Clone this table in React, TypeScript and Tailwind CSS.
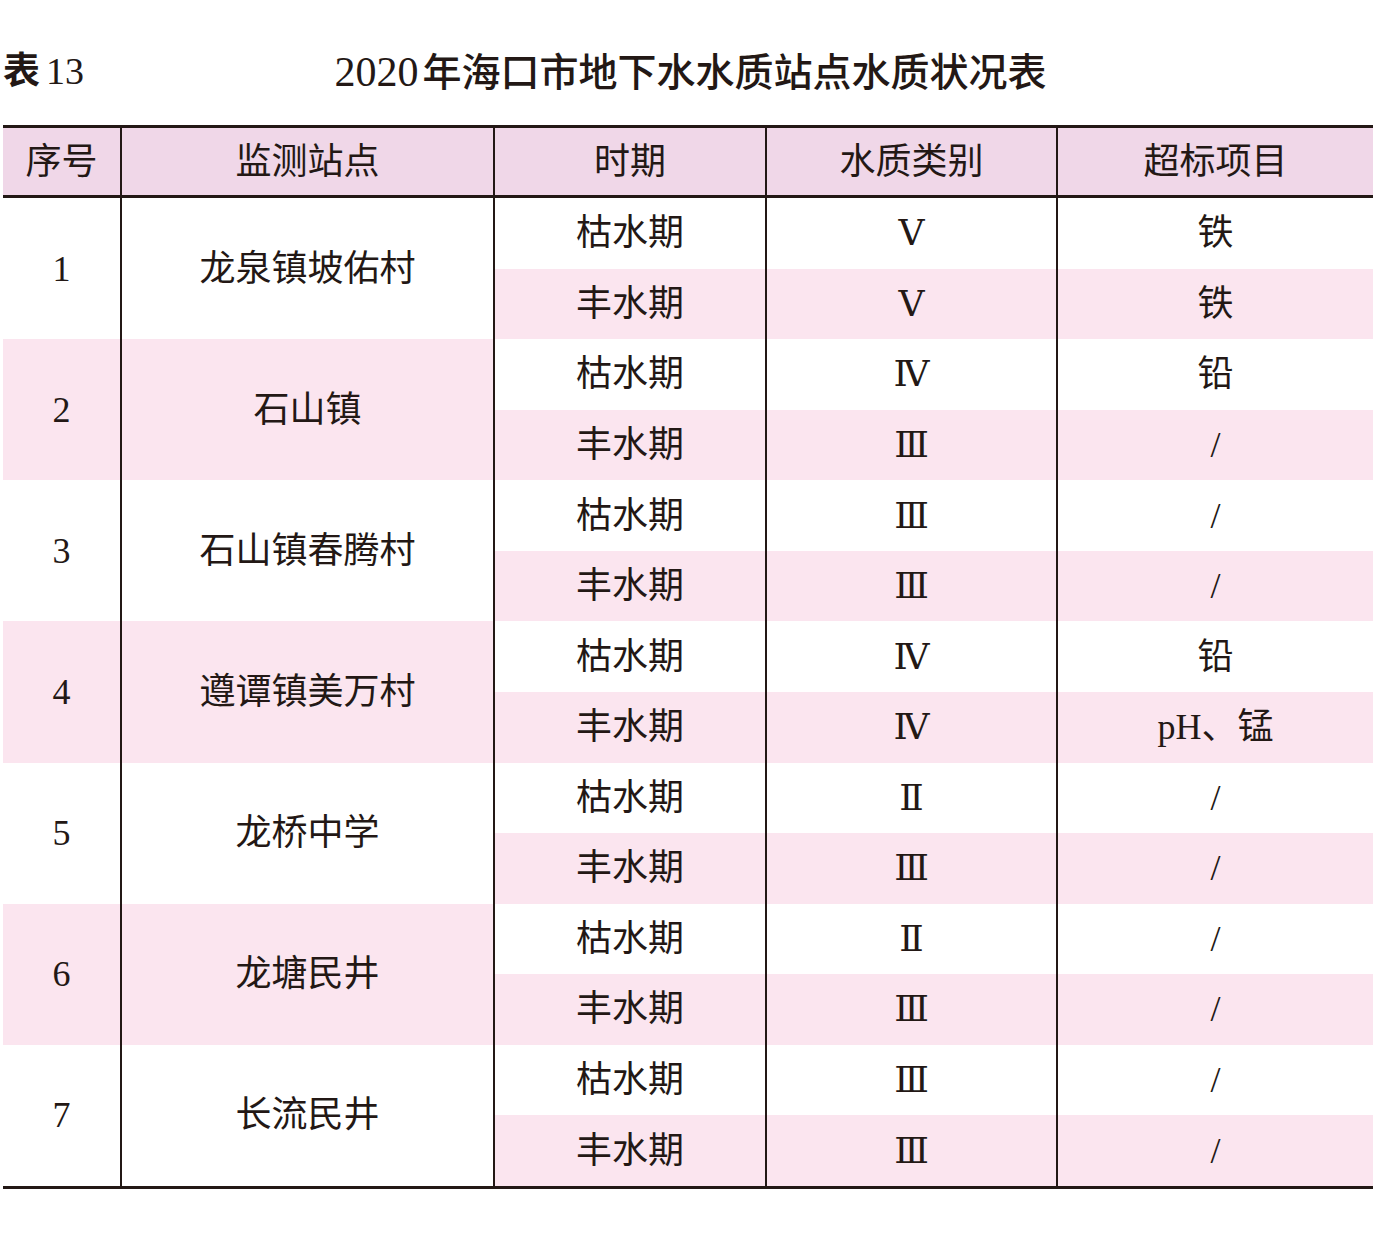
const rows = [
  { id: '1', site: '龙泉镇坡佑村', a: ['Ⅴ', '铁'], b: ['Ⅴ', '铁'] },
  { id: '2', site: '石山镇', a: ['Ⅳ', '铅'], b: ['Ⅲ', '/'] },
  { id: '3', site: '石山镇春腾村', a: ['Ⅲ', '/'], b: ['Ⅲ', '/'] },
  { id: '4', site: '遵谭镇美万村', a: ['Ⅳ', '铅'], b: ['Ⅳ', 'pH、锰'] },
  { id: '5', site: '龙桥中学', a: ['Ⅱ', '/'], b: ['Ⅲ', '/'] },
  { id: '6', site: '龙塘民井', a: ['Ⅱ', '/'], b: ['Ⅲ', '/'] },
  { id: '7', site: '长流民井', a: ['Ⅲ', '/'], b: ['Ⅲ', '/'] },
];

const serif = { fontFamily: '"Liberation Serif", "DejaVu Serif", "Noto Sans CJK SC", serif' };
const hei = { fontFamily: '"Noto Sans CJK SC", sans-serif' };

export default function App() {
  return (
    <div className="w-[1381px] h-[1234px] bg-white text-[#231815]" style={serif}>
      <div className="relative h-[125px]">
        <div className="absolute left-[3px] top-[50px] flex items-baseline text-[38px] leading-none">
          <span className="font-bold text-[37px]" style={hei}>表</span>
          <span className="ml-[6px]">13</span>
        </div>
        <div className="absolute left-0 right-0 top-[50px] flex justify-center items-baseline leading-none">
          <span className="text-[42px]">2020</span>
          <span className="ml-[4px] text-[39px] font-medium" style={hei}>
            年海口市地下水水质站点水质状况表
          </span>
        </div>
      </div>

      <div className="ml-[3px] w-[1370px] grid grid-cols-[117px_373px_272px_291px_317px] border-t-[3px] border-b-[3px] border-[#231815] text-[36px]">
        {['序号', '监测站点', '时期', '水质类别', '超标项目'].map((h, i) => (
          <div
            key={h}
            className={`h-[70px] flex items-center justify-center bg-[#f0d7e8] border-b-[3px] border-[#231815] ${i > 0 ? 'border-l-2' : ''}`}
          >
            {h}
          </div>
        ))}
        {rows.map((r, gi) => {
          const pink = gi % 2 === 1;
          return [
            <div key={r.id + 'n'} className={`row-span-2 flex items-center justify-center ${pink ? 'bg-[#fbe5ef]' : 'bg-white'}`}>
              {r.id}
            </div>,
            <div key={r.id + 's'} className={`row-span-2 flex items-center justify-center border-l-2 border-[#231815] ${pink ? 'bg-[#fbe5ef]' : 'bg-white'}`}>
              {r.site}
            </div>,
            <div key={r.id + 'a1'} className="h-[70.57px] flex items-center justify-center border-l-2 border-[#231815] bg-white">枯水期</div>,
            <div key={r.id + 'a2'} className="h-[70.57px] flex items-center justify-center border-l-2 border-[#231815] bg-white">{r.a[0]}</div>,
            <div key={r.id + 'a3'} className="h-[70.57px] flex items-center justify-center border-l-2 border-[#231815] bg-white">{r.a[1]}</div>,
            <div key={r.id + 'b1'} className="h-[70.57px] flex items-center justify-center border-l-2 border-[#231815] bg-[#fbe5ef]">丰水期</div>,
            <div key={r.id + 'b2'} className="h-[70.57px] flex items-center justify-center border-l-2 border-[#231815] bg-[#fbe5ef]">{r.b[0]}</div>,
            <div key={r.id + 'b3'} className="h-[70.57px] flex items-center justify-center border-l-2 border-[#231815] bg-[#fbe5ef]">{r.b[1]}</div>,
          ];
        })}
      </div>
    </div>
  );
}
